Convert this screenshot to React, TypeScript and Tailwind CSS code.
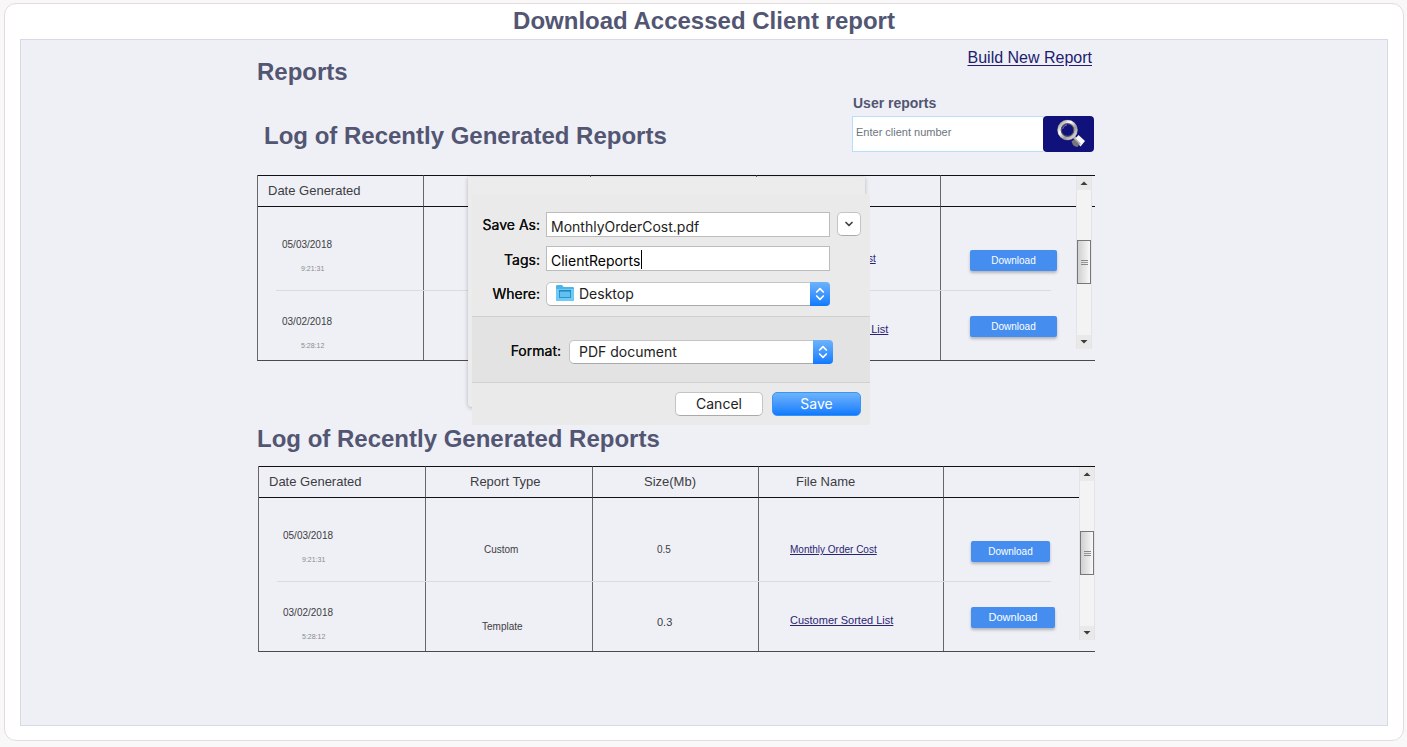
import React from "react";
import { ChevronDown, ChevronsUpDown } from "lucide-react";

type Row = {
  date: string;
  time: string;
  type?: string;
  size?: string;
  file: string;
};

type RowStyle = {
  row: string;
  date: string;
  type: string;
  size: string;
  file: string;
  action: string;
};

const clientRows: Row[] = [
  { date: "05/03/2018", time: "9:21:31", file: "Monthly Order Cost" },
  { date: "03/02/2018", time: "5:28:12", file: "Customer Sorted List" },
];

const recentRows: Row[] = [
  { date: "05/03/2018", time: "9:21:31", type: "Custom", size: "0.5", file: "Monthly Order Cost" },
  { date: "03/02/2018", time: "5:28:12", type: "Template", size: "0.3", file: "Customer Sorted List" },
];

const rowStyles: RowStyle[] = [
  {
    row: "h-[84px]",
    date: "pt-8",
    type: "pt-[46px] pl-[58px]",
    size: "pt-[46px] text-[10px]",
    file: "pt-[46px] text-[10px]",
    action: "pt-[43px]",
  },
  {
    row: "h-[69px]",
    date: "pt-[25px]",
    type: "pt-[39px] pl-14",
    size: "pt-[34px] text-[11px]",
    file: "pt-8 text-[11px]",
    action: "pt-[25px]",
  },
];

function Scrollbar({ className }: { className: string }) {
  return (
    <div className={`absolute top-px flex h-[173px] w-4 flex-col items-stretch border-x border-[#e4e4e6] bg-[#f3f3f3] ${className}`}>
      <button type="button" aria-label="Scroll up" className="flex h-[14px] items-center justify-center bg-[#e9e9e9]">
        <svg width="8" height="4" viewBox="0 0 8 4"><path d="M.5 4 4 .5 7.500 4z" fill="#3c3c3c" /></svg>
      </button>
      <div className="mt-[50px] flex h-11 flex-col items-center justify-center gap-px border border-[#777] bg-linear-to-r from-[#d0d0d0] to-[#f8f8f8]">
        <span className="h-px w-[7px] bg-[#888]" />
        <span className="h-px w-[7px] bg-[#999]" />
        <span className="h-px w-[7px] bg-[#888]" />
      </div>
      <button type="button" aria-label="Scroll down" className="mt-auto flex h-[14px] items-center justify-center bg-[#e9e9e9]">
        <svg width="8" height="4" viewBox="0 0 8 4"><path d="M.5 0h7L4 3.500z" fill="#3c3c3c" /></svg>
      </button>
    </div>
  );
}

function ReportTable({
  label,
  rows,
  headings,
  columns,
  filePads,
  actionPad,
  buttons,
  scrollbar,
}: {
  label: string;
  rows: Row[];
  headings: string[];
  columns: string[];
  filePads: string[];
  actionPad: string;
  buttons: string[];
  scrollbar: string;
}) {
  const head = "border-y border-[#111] p-0 pb-px text-left align-middle font-normal";
  const line = "border-r border-r-[#66666a]";
  const headPads = ["pl-[10px]", "pl-11", "pl-[51px]", "pl-[37px]"];
  return (
    <div className="relative">
      <table aria-label={label} className="w-full table-fixed border-separate border-spacing-0 border-b border-l border-b-[#4a4a4e] border-l-[#66666a] text-[#3d3d42]">
        <colgroup>
          {columns.map((width, i) => (
            <col key={i} className={width} />
          ))}
        </colgroup>
        <thead>
          <tr className="h-8 text-[13px] leading-4">
            {headings.map((text, i) => (
              <th key={i} className={`${head} ${line} ${headPads[i]}`}>{text}</th>
            ))}
            <td className={head} />
          </tr>
        </thead>
        <tbody>
          {rows.map((row, i) => {
            const s = rowStyles[i];
            return (
              <tr key={row.date} className={`${s.row} align-top leading-3`}>
                <td className={`${line} ${s.date} pl-6`}>
                  <div className="text-[10px]">{row.date}</div>
                  <div className="mt-3 pl-[19px] text-[7px] text-[#8a8a90]">{row.time}</div>
                </td>
                <td className={`${line} ${s.type} text-[10px]`}>{row.type}</td>
                <td className={`${line} ${s.size} pl-16`}>{row.size}</td>
                <td className={`${line} ${s.file} ${filePads[i]}`}>
                  <a href="#file" className="text-[#2a2472] underline underline-offset-1">{row.file}</a>
                </td>
                <td className={`${s.action} ${actionPad}`}>
                  <button type="button" className={`block h-[21px] rounded-xs bg-[#458ef0] text-center text-white shadow-[0_2px_3px_rgba(0,0,0,0.25)] ${buttons[i]}`}>
                    Download
                  </button>
                </td>
              </tr>
            );
          })}
        </tbody>
      </table>
      <div className="absolute top-[115px] right-[44px] left-[19px] h-px bg-[#dadbdf]" />
      <Scrollbar className={scrollbar} />
    </div>
  );
}

function FolderIcon() {
  return (
    <svg width="18" height="16" viewBox="0 0 18 16" className="pointer-events-none absolute top-[3px] left-[10px]">
      <path d="M0 1.2Q0 0 1.2 0H6l1.6 2h9.2Q18 2 18 3.2v11.6Q18 16 16.8 16H1.2Q0 16 0 14.800z" fill="#4db4e6" />
      <path d="M0 4h18v10.8q0 1.2-1.2 1.2H1.2Q0 16 0 14.800z" fill="#6fcaf4" />
      <rect x="3.5" y="5.5" width="11" height="7" fill="#62c0f0" stroke="#2d93cf" />
      <path d="M3 5.8h12" stroke="#2586c3" strokeWidth="1.6" />
    </svg>
  );
}

function SelectArrows() {
  return (
    <span className="pointer-events-none absolute inset-y-0 right-0 flex w-5 items-center justify-center rounded-r-[4px] bg-linear-to-b from-[#6cb3fa] to-[#0a7aff] text-white">
      <ChevronsUpDown size={16} strokeWidth={2.5} />
    </span>
  );
}

function SaveDialog() {
  const label = "text-right text-[#111] [text-shadow:0_0_0.5px_#000]";
  const field = "h-[25px] w-full border border-[#bcbcbc] bg-white px-1 pt-[3px] text-[#222] outline-none";
  const select = "h-6 w-full appearance-none rounded-[5px] border border-[#c4c4c4] border-b-[#aaa] bg-white text-[#222] outline-none";
  return (
    <>
      <div className="absolute top-[2px] left-[211px] h-[230px] w-[397px] rounded-b-sm bg-[#ececec] shadow-[0_1px_4px_rgba(0,0,0,0.25)]" />
      <form
        role="dialog"
        aria-label="Save report"
        className="absolute top-[19px] left-[215px] w-[398px] bg-[#eaeaea] font-[Inter,sans-serif] text-sm leading-5"
        onSubmit={(e) => e.preventDefault()}
      >
        <div className="grid grid-cols-[68px_284px_24px] gap-x-[6px] pt-[18px] pb-[10px]">
          <label htmlFor="save-as" className={`${label} pt-[3px]`}>Save As:</label>
          <input id="save-as" defaultValue="MonthlyOrderCost.pdf" className={field} />
          <button type="button" aria-label="Expand dialog" className="ml-px flex size-6 items-center justify-center rounded-[5px] border border-[#c4c4c4] border-b-[#aaa] bg-white text-[#444]">
            <ChevronDown size={12} strokeWidth={3.5} />
          </button>
          <label htmlFor="tags" className={`${label} pt-[13px]`}>Tags:</label>
          <div className="relative col-span-2 mt-[9px] w-[284px]">
            <input id="tags" defaultValue="ClientReports" className={`${field} text-black`} />
            <span className="absolute top-1 left-[95px] h-[19px] w-px bg-black" />
          </div>
          <label htmlFor="where" className={`${label} pt-[13px]`}>Where:</label>
          <div className="relative col-span-2 mt-[11px] w-[284px]">
            <select id="where" className={`${select} pl-8`}>
              <option>Desktop</option>
            </select>
            <FolderIcon />
            <SelectArrows />
          </div>
        </div>
        <div className="flex gap-2 border-y border-[#d0d0d0] bg-[#e3e3e3] pt-[23px] pb-[18px]">
          <label htmlFor="format" className={`${label} w-[89px] pt-px`}>Format:</label>
          <div className="relative w-[264px]">
            <select id="format" className={`${select} pl-[9px]`}>
              <option>PDF document</option>
            </select>
            <SelectArrows />
          </div>
        </div>
        <div className="flex justify-end gap-[9px] py-[9px] pr-[9px]">
          <button type="button" className="h-6 w-[88px] rounded-[5px] border border-[#c4c4c4] border-b-[#aaa] bg-white text-[#222]">Cancel</button>
          <button type="submit" className="h-6 w-[89px] rounded-[5px] border border-[#3d93f2] bg-linear-to-b from-[#6cb3fa] to-[#0a7aff] text-white">Save</button>
        </div>
      </form>
    </>
  );
}

function SearchIcon() {
  return (
    <svg width="30" height="30" viewBox="0 0 30 30">
      <defs>
        <linearGradient id="rim" x1="0" y1="0" x2="1" y2="1">
          <stop offset="0" stopColor="#8f8f93" />
          <stop offset="0.35" stopColor="#ffffff" />
          <stop offset="0.65" stopColor="#9b9b9f" />
          <stop offset="1" stopColor="#ececec" />
        </linearGradient>
      </defs>
      <path d="m17 17 4 4" stroke="#b9b9bd" strokeWidth="3" />
      <path d="m18.500 20.500 4-4.500 6.500 6-4.500 5.500z" fill="#f9f9f9" />
      <path d="m15.500 22.500 3-2.500 5 5-2 3q-2.500 0-4.500-2z" fill="#77777b" />
      <path d="m19 19.500 5.500 6" stroke="#b3b3b6" strokeWidth="1.500" />
      <circle cx="11.500" cy="11" r="8.300" fill="none" stroke="#77777d" strokeWidth="4" />
      <circle cx="11.500" cy="11" r="8.400" fill="none" stroke="url(#rim)" strokeWidth="3" />
      <circle cx="11.500" cy="11" r="6.200" fill="none" stroke="#55555f" strokeWidth="1" />
      <path d="M6.500 10q1-3.500 4.500-4.200" fill="none" stroke="#7474b4" />
    </svg>
  );
}

export default function App() {
  const heading = "text-2xl leading-8 font-bold text-[#525673]";
  return (
    <div className="min-h-screen bg-[#f8f8f8] pt-[3px] pr-[3px] pb-[6px] pl-1 font-['Liberation_Sans',Arial,sans-serif]">
      <main className="rounded-xl border border-[#e6dadc] bg-white px-[15px] pb-[14px]">
        <h1 className="pb-px text-center text-2xl leading-[34px] font-bold text-[#525673]">Download Accessed Client report</h1>
        <section className="border border-[#d9d9e6] bg-[#eff0f6] pr-14 pb-[73px]">
          <div className="mx-auto w-full max-w-[838px]">
            <div className="flex justify-between">
              <div className="pt-4">
                <h2 className={heading}>Reports</h2>
                <h2 className={`${heading} mt-8 pl-[7px]`}>Log of Recently Generated Reports</h2>
              </div>
              <div className="flex w-[243px] flex-col pt-2 pr-px">
                <a href="#new-report" className="self-end pr-[2px] text-base leading-5 text-[#211c70] underline underline-offset-2">Build New Report</a>
                <label htmlFor="client" className="mt-[25px] pl-px text-sm leading-5 font-bold text-[#525673]">User reports</label>
                <div className="mt-[3px] flex h-9">
                  <input
                    id="client"
                    placeholder="Enter client number"
                    className="min-w-0 flex-1 border border-r-0 border-[#b9defa] bg-white pb-1 pl-[3px] text-[11px] text-[#444] outline-none placeholder:text-[#6c757d]"
                  />
                  <button type="button" aria-label="Search" className="flex w-[51px] items-center justify-center rounded-[4px] bg-[#10117b] pl-1">
                    <SearchIcon />
                  </button>
                </div>
              </div>
            </div>
            <div className="relative mt-[23px]">
              <ReportTable
                label="User reports"
                rows={clientRows}
                headings={["Date Generated", "", "", ""]}
                columns={["w-[166px]", "w-[167px]", "w-[166px]", "w-[184px]", "w-auto"]}
                filePads={["pl-8", "pl-7"]}
                actionPad="pl-[29px]"
                buttons={["w-[87px] text-[10px]", "w-[87px] text-[10px]"]}
                scrollbar="right-[3px]"
              />
              <SaveDialog />
            </div>
            <h2 className={`${heading} mt-[62px]`}>Log of Recently Generated Reports</h2>
            <div className="mt-[11px] pl-px">
              <ReportTable
                label="Recently generated reports"
                rows={recentRows}
                headings={["Date Generated", "Report Type", "Size(Mb)", "File Name"]}
                columns={["w-[167px]", "w-[167px]", "w-[166px]", "w-[185px]", "w-auto"]}
                filePads={["pl-[31px]", "pl-[31px]"]}
                actionPad="pl-[27px]"
                buttons={["w-[79px] text-[10px]", "w-[84px] pb-[2px] text-[11px]"]}
                scrollbar="right-0"
              />
            </div>
          </div>
        </section>
      </main>
    </div>
  );
}
